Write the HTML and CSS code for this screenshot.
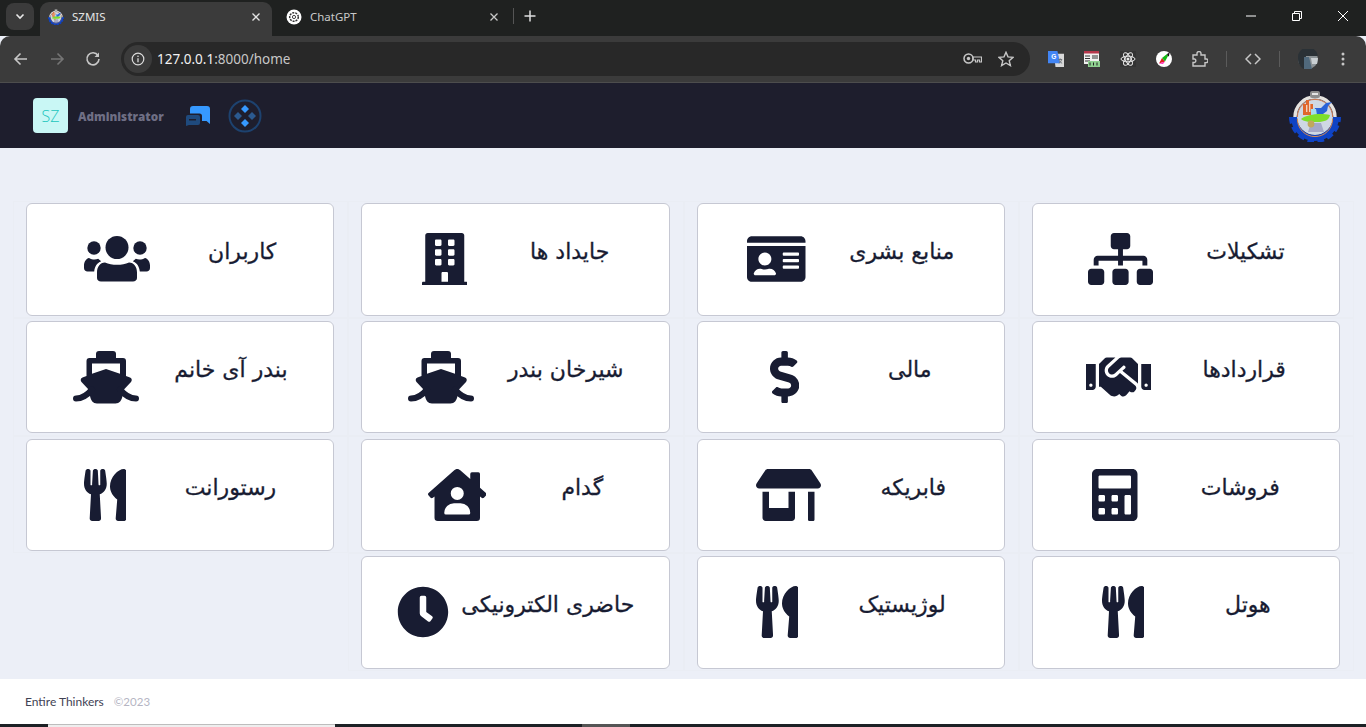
FILE: index.html
```html
<!DOCTYPE html>
<html lang="fa">
<head>
<meta charset="utf-8">
<title>SZMIS</title>
<link rel="stylesheet" href="styles.css">
</head>
<body>
<svg class="defs" width="0" height="0" aria-hidden="true">
  <symbol id="logo" viewBox="0 0 52 52">
    <circle cx="26" cy="27" r="18" fill="#cfd8e4"/>
    <path d="M2 27A24 24 0 0 0 50 27H44A18 18 0 0 1 8 27Z" fill="#0f43c4"/>
    <path d="M2 27A24 24 0 0 0 50 27" fill="none" stroke="#0f43c4" stroke-width="4" stroke-dasharray="6.500 3.500"/>
    <path d="M6 27A20 20 0 0 1 46 27" fill="none" stroke="#e6e3e0" stroke-width="3.400"/>
    <path d="M8.400 27A17.600 17.600 0 0 1 43.600 27" fill="none" stroke="#c96a3c" stroke-width=".9"/>
    <path d="M8.400 29A17.600 17.600 0 0 0 43.600 29" fill="none" stroke="#d98a50" stroke-width="1"/>
    <rect x="21" y="1" width="10" height="7" rx="2" fill="#8d8d8d"/>
    <rect x="23" y="3" width="6" height="2" fill="#e4e4e4"/>
    <path d="M14 25V14h3v-4h3v4h4v11Z" fill="#e0672c"/>
    <path d="M17 15h1.400v7H17zM20 13h1.400v9H20z" fill="#f3d2bd"/>
    <path d="M24 25l2-7 6 0 5-5 6-1-4 4-1 5-4 3-3 2Z" fill="#2a63d8"/>
    <path d="M22 19h5l1 6h-6Z" fill="#a6dcf0"/>
    <path d="M12 29c6-5 20-6 29-4-1 5-5 7-13 7-6 0-13 0-16-3Z" fill="#7ede2c"/>
    <path d="M22 33h10l3 9H19Z" fill="#a4a8c8"/>
    <circle cx="22" cy="34" r="3.400" fill="#c1a85c"/>
  </symbol>
  <symbol id="ship" viewBox="0 0 66 53">
    <path d="M26 0h14a3 3 0 0 1 3 3v5H23V3a3 3 0 0 1 3-3Z"/>
    <path fill-rule="evenodd" d="M16 7h34a3 3 0 0 1 3 3v15l4 1.500c2 .8 2.300 3 1 4.500l-7.500 8-1 6c-.8 4.500-3 7.500-7 7.500H24c-4 0-6.200-3-7-7.500l-1-6-7.500-8c-1.300-1.500-1-3.700 1-4.500l4-1.500V10a3 3 0 0 1 3-3ZM19 12.500v10.200L33 18l14 4.700V12.500Z"/>
    <path d="M3 47.500c6 0 11-3 16-9M63 47.500c-6 0-11-3-16-9" fill="none" stroke="#181c32" stroke-width="6" stroke-linecap="round"/>
  </symbol>
  <symbol id="users" viewBox="0 0 66 52">
    <circle cx="33" cy="14.500" r="11.500"/>
    <circle cx="10" cy="15" r="6.700"/>
    <circle cx="56" cy="15" r="6.700"/>
    <path d="M21 29.500c3.500 1.500 7.500 2.300 12 2.300s8.500-.8 12-2.300c5 0 8 4.500 8 10V45c0 2.200-1.800 3.500-4 3.500H17c-2.200 0-4-1.300-4-3.500v-5.500c0-5.500 3-10 8-10Z"/>
    <path d="M5 25c2 1 3.500 1.500 5.500 1.500 1.300 0 2.500-.2 3.700-.7 1 1 1.800 1.700 3 2.500-4.500 2-6.500 5.500-7 10.200H3.500C1.500 38.500 0 37 0 35v-2.500C0 29 2 25.500 5 25ZM61 25c-2 1-3.500 1.500-5.500 1.500-1.300 0-2.500-.2-3.700-.7-1 1-1.800 1.700-3 2.500 4.500 2 6.500 5.500 7 10.200h6.700c2 0 3.500-1.500 3.500-3.500v-2.500C66 29 64 25.500 61 25Z"/>
  </symbol>
  <symbol id="utensils" viewBox="0 0 416 512">
    <path d="M207.900 15.200c.8 4.700 16.100 94.500 16.100 128.800 0 52.300-27.800 89.600-68.900 104.600L168 486.700c.7 13.700-10.200 25.300-24 25.300H80c-13.700 0-24.700-11.500-24-25.300l12.900-238.100C27.700 233.600 0 196.200 0 144 0 109.600 15.300 19.900 16.100 15.200 19.300-5.100 61.400-5.400 64 16.300v141.200c1.300 3.400 15.100 3.200 16 0 1.400-25.300 7.900-139.200 8-141.800 3.300-20.800 44.700-20.800 47.900 0 .2 2.700 6.600 116.500 8 141.800.9 3.200 14.800 3.400 16 0V16.300c2.600-21.600 44.800-21.400 48-1.100zm119.200 285.700l-15 185.100c-1.200 14 9.900 26 23.900 26h56c13.300 0 24-10.700 24-24V24c0-13.200-10.700-24-24-24-82.500 0-221.400 178.500-64.900 300.900z"/>
  </symbol>
</svg>

<div class="tabstrip">
  <button class="tab-search"><svg width="10" height="7" viewBox="0 0 10 7"><path d="M1.500 1.500 5 5l3.500-3.500" fill="none" stroke="#e8e8e8" stroke-width="1.600"/></svg></button>
  <div class="tab tab-active">
    <svg class="favicon" width="16" height="16"><use href="#logo"/></svg>
    <span class="tab-title">SZMIS</span>
    <svg class="tab-close" width="10" height="10" viewBox="0 0 10 10"><path d="M1.500 1.500l7 7m0-7-7 7" stroke="#e3e3e3" stroke-width="1.300"/></svg>
  </div>
  <div class="tab tab-idle">
    <svg class="favicon" width="16" height="16" viewBox="0 0 16 16"><circle cx="8" cy="8" r="7.500" fill="#fff"/><circle cx="8" cy="8" r="4.300" fill="none" stroke="#333" stroke-width="1.500" stroke-dasharray="2 1"/><circle cx="8" cy="8" r="1.600" fill="none" stroke="#444"/></svg>
    <span class="tab-title">ChatGPT</span>
    <svg class="tab-close" width="10" height="10" viewBox="0 0 10 10"><path d="M1.500 1.500l7 7m0-7-7 7" stroke="#c7c7c7" stroke-width="1.300"/></svg>
  </div>
  <span class="tab-sep"></span>
  <svg class="tab-new" width="12" height="12" viewBox="0 0 12 12"><path d="M6 .5v11M.5 6h11" stroke="#dedede" stroke-width="1.500"/></svg>
  <div class="win-controls">
    <svg width="10" height="10" viewBox="0 0 10 10"><path d="M0 5h10" stroke="#fff"/></svg>
    <svg width="10" height="10" viewBox="0 0 10 10"><path d="M2.500 2V.5h7v7H8M.5 2.500h7v7h-7Z" fill="none" stroke="#fff"/></svg>
    <svg width="10" height="10" viewBox="0 0 10 10"><path d="M0 0l10 10M10 0 0 10" stroke="#fff"/></svg>
  </div>
</div>

<div class="toolbar">
  <div class="nav">
    <svg width="16" height="16" viewBox="0 0 16 16"><path d="M14 8H2.500M7.500 2.500 2 8l5.500 5.500" fill="none" stroke="#c7c7c7" stroke-width="1.600"/></svg>
    <svg width="16" height="16" viewBox="0 0 16 16"><path d="M2 8h11.500M8.500 2.500 14 8l-5.500 5.500" fill="none" stroke="#757575" stroke-width="1.600"/></svg>
    <svg width="16" height="16" viewBox="0 0 16 16"><path d="M13 4.500A6 6 0 1 0 14 8" fill="none" stroke="#c7c7c7" stroke-width="1.600"/><path d="M14 1.500v4.500H9.500Z" fill="#c7c7c7"/></svg>
  </div>
  <div class="omnibox">
    <span class="site-info"><svg width="14" height="14" viewBox="0 0 14 14"><circle cx="7" cy="7" r="5.800" fill="none" stroke="#dcdcdc" stroke-width="1.200"/><path d="M7 6.200v4" stroke="#dcdcdc" stroke-width="1.300"/><circle cx="7" cy="4.200" r=".8" fill="#dcdcdc"/></svg></span>
    <span class="url">127.0.0.1<span class="url-path">:8000/home</span></span>
    <svg class="omni-key" width="19" height="11" viewBox="0 0 19 11"><circle cx="5.500" cy="5.500" r="4.500" fill="none" stroke="#c7c7c7" stroke-width="1.500"/><circle cx="5.500" cy="5.500" r="1.700" fill="#c7c7c7"/><path d="M10 4h8.500v5h-2V7h-2v2h-2V7H10Z" fill="none" stroke="#c7c7c7" stroke-width="1.200"/></svg>
    <svg class="omni-star" width="16" height="16" viewBox="0 0 16 16"><path d="M8 1.300l2 4.600 5 .5-3.800 3.300 1.200 4.900L8 12l-4.400 2.600 1.200-4.900L1 6.400l5-.5Z" fill="none" stroke="#c7c7c7" stroke-width="1.400"/></svg>
  </div>
  <div class="ext">
    <svg width="16" height="16" viewBox="0 0 17 17"><path d="M6 3h11v14H8Z" fill="#d9d9d9"/><path d="M0 0h10l3 13H0Z" fill="#4285f4"/><text x="3.500" y="9" class="ext-g">G</text><path d="M11 9h4M13 8v1m1.500 0c-.5 2-1.500 3-3 4m.5-3c.5 1.500 1.500 2.500 3 3" stroke="#6b7075" fill="none"/></svg>
    <svg width="16" height="16" viewBox="0 0 16 16"><rect width="15" height="13" fill="#f1f1f1"/><rect width="15" height="2.500" fill="#b5364b"/><path d="M1 5h5M1 7.500h5M1 10h5M8 5h6M8 7h6" stroke="#333"/><rect x="4" y="10" width="12" height="6" fill="#8fd190"/><path d="M6 11.500v3M9.500 11.500v3M13 11.500v3" stroke="#222"/></svg>
    <svg width="16" height="16" viewBox="0 0 16 16"><rect width="16" height="16" fill="#333"/><g fill="none" stroke="#e8e8e8"><ellipse cx="8" cy="8" rx="7" ry="2.800"/><ellipse cx="8" cy="8" rx="7" ry="2.800" transform="rotate(60 8 8)"/><ellipse cx="8" cy="8" rx="7" ry="2.800" transform="rotate(120 8 8)"/></g><circle cx="8" cy="8" r="1.500" fill="#e8e8e8"/></svg>
    <svg width="16" height="16" viewBox="0 0 16 16"><circle cx="8" cy="8" r="8" fill="#fff"/><path d="M3 12.500 6 7l3 3.500Z" fill="#e02020"/><path d="M6 7l5-4 1 2-3 5.500Z" fill="#14b814"/><path d="M11 3l2.500-1.500L13 5l-1 .5Z" fill="#111"/><path d="M3 12.500 9 10.500l-2 2.500Z" fill="#ff2fc0"/></svg>
    <svg width="16" height="16" viewBox="0 0 16 16"><path d="M1 4h4V2.500a2 2 0 0 1 4 0V4h4v4h1.200a1.800 1.800 0 0 1 0 3.600H13V15H1v-3.500h1.500a1.800 1.800 0 0 0 0-3.500H1Z" fill="none" stroke="#c7c7c7" stroke-width="1.400"/></svg>
    <span class="tool-sep"></span>
    <svg width="16" height="12" viewBox="0 0 16 12"><path d="M6 1 1 6l5 5M10 1l5 5-5 5" fill="none" stroke="#c7c7c7" stroke-width="1.500"/></svg>
    <span class="tool-sep"></span>
    <svg class="profile" width="20" height="20" viewBox="0 0 20 20"><circle cx="10" cy="10" r="10" fill="#8b9296"/><path d="M0 10A10 10 0 0 1 20 7H8l-2 13C2 18 0 14 0 10Z" fill="#2a3136"/><path d="M6 8h5l3 12H6Z" fill="#50697c"/><path d="M13 9h7l-1 6h-5Z" fill="#c9cfd2"/></svg>
    <svg width="4" height="14" viewBox="0 0 4 14"><circle cx="2" cy="2" r="1.500" fill="#c7c7c7"/><circle cx="2" cy="7" r="1.500" fill="#c7c7c7"/><circle cx="2" cy="12" r="1.500" fill="#c7c7c7"/></svg>
  </div>
</div>

<header class="app-header">
  <span class="avatar">SZ</span>
  <span class="user-name">Administrator</span>
  <svg class="chat-ico" width="24" height="20" viewBox="0 0 24 20"><path d="M7 0H21a3 3 0 0 1 3 3V18L20.500 15H16V10a2.500 2.500 0 0 0-2.500-2.500H4V3a3 3 0 0 1 3-3Z" fill="#3699ff"/><path d="M2 9H12a2 2 0 0 1 2 2v6a2 2 0 0 1-2 2H3L0 20V11a2 2 0 0 1 2-2Z" fill="#1f4a7d"/><path d="M3 13h7v1.500H3Z" fill="#1e1e2d"/></svg>
  <svg class="menu-ico" width="34" height="34" viewBox="0 0 34 34"><circle cx="17" cy="17" r="15.500" fill="none" stroke="#1d426f" stroke-width="2"/><path d="M17 6l4 4-4 4-4-4ZM17 20l4 4-4 4-4-4Z" fill="#3699ff"/><path d="M10 13l4 4-4 4-4-4ZM24 13l4 4-4 4-4-4Z" fill="#2b5a90"/></svg>
  <svg class="brand" width="52" height="52"><use href="#logo"/></svg>
</header>

<main class="board">
  <div class="cell"><a class="tile"><div class="label">تشکیلات</div>
    <svg class="ic" width="65" height="52" viewBox="0 0 640 512"><path d="M128 352H32c-17.670 0-32 14.330-32 32v96c0 17.670 14.330 32 32 32h96c17.670 0 32-14.330 32-32v-96c0-17.670-14.330-32-32-32zm-24-80h192v48h48v-48h192v48h48v-57.590c0-21.170-17.230-38.410-38.410-38.410H344v-64h40c17.670 0 32-14.330 32-32V32c0-17.670-14.330-32-32-32H256c-17.670 0-32 14.330-32 32v96c0 17.670 14.330 32 32 32h40v64H94.410C73.230 224 56 241.230 56 262.410V320h48v-48zm264 80h-96c-17.670 0-32 14.330-32 32v96c0 17.670 14.330 32 32 32h96c17.670 0 32-14.330 32-32v-96c0-17.670-14.330-32-32-32zm240 0h-96c-17.670 0-32 14.330-32 32v96c0 17.670 14.330 32 32 32h96c17.670 0 32-14.330 32-32v-96c0-17.670-14.330-32-32-32z"/></svg></a></div>
  <div class="cell"><a class="tile"><div class="label">منابع بشری</div>
    <svg class="ic" width="58.500" height="52" viewBox="0 0 576 512"><path d="M528 32H48C21.500 32 0 53.500 0 80v16h576V80c0-26.500-21.500-48-48-48zM0 432c0 26.500 21.500 48 48 48h480c26.500 0 48-21.500 48-48V128H0v304zm352-232c0-4.400 3.600-8 8-8h144c4.400 0 8 3.600 8 8v16c0 4.400-3.600 8-8 8H360c-4.400 0-8-3.600-8-8v-16zm0 64c0-4.400 3.600-8 8-8h144c4.400 0 8 3.600 8 8v16c0 4.400-3.600 8-8 8H360c-4.400 0-8-3.600-8-8v-16zm0 64c0-4.400 3.600-8 8-8h144c4.400 0 8 3.600 8 8v16c0 4.400-3.600 8-8 8H360c-4.400 0-8-3.600-8-8v-16zM176 192c35.300 0 64 28.700 64 64s-28.700 64-64 64-64-28.700-64-64 28.700-64 64-64zM67.100 396.200C75.500 370.500 99.600 352 128 352h8.200c12.300 5.100 25.700 8 39.800 8s27.600-2.900 39.800-8h8.200c28.400 0 52.500 18.500 60.900 44.200 3.200 9.900-5.200 19.800-15.600 19.800H82.700c-10.400 0-18.800-10-15.600-19.800z"/></svg></a></div>
  <div class="cell"><a class="tile"><div class="label">جایداد ها</div>
    <svg class="ic" width="45.500" height="52" viewBox="0 0 448 512"><path d="M436 480h-20V24c0-13.255-10.745-24-24-24H56C42.745 0 32 10.745 32 24v456H12c-6.627 0-12 5.373-12 12v20h448v-20c0-6.627-5.373-12-12-12zM128 76c0-6.627 5.373-12 12-12h40c6.627 0 12 5.373 12 12v40c0 6.627-5.373 12-12 12h-40c-6.627 0-12-5.373-12-12V76zm0 96c0-6.627 5.373-12 12-12h40c6.627 0 12 5.373 12 12v40c0 6.627-5.373 12-12 12h-40c-6.627 0-12-5.373-12-12v-40zm52 148h-40c-6.627 0-12-5.373-12-12v-40c0-6.627 5.373-12 12-12h40c6.627 0 12 5.373 12 12v40c0 6.627-5.373 12-12 12zm76 160h-64v-84c0-6.627 5.373-12 12-12h40c6.627 0 12 5.373 12 12v84zm64-172c0 6.627-5.373 12-12 12h-40c-6.627 0-12-5.373-12-12v-40c0-6.627 5.373-12 12-12h40c6.627 0 12 5.373 12 12v40zm0-96c0 6.627-5.373 12-12 12h-40c-6.627 0-12-5.373-12-12v-40c0-6.627 5.373-12 12-12h40c6.627 0 12 5.373 12 12v40zm0-96c0 6.627-5.373 12-12 12h-40c-6.627 0-12-5.373-12-12V76c0-6.627 5.373-12 12-12h40c6.627 0 12 5.373 12 12v40z"/></svg></a></div>
  <div class="cell"><a class="tile"><div class="label">کاربران</div>
    <svg class="ic" width="66" height="52"><use href="#users"/></svg></a></div>

  <div class="cell"><a class="tile"><div class="label">قراردادها</div>
    <svg class="ic" width="65" height="52" viewBox="0 0 640 512"><path d="M434.700 64h-85.900c-8 0-15.700 3-21.600 8.400l-98.300 90c-.1.1-.2.3-.3.4-16.600 15.600-16.300 40.500-2.100 56 12.700 13.900 39.400 17.600 56.100 2.700.1-.1.3-.1.400-.2l79.900-73.200c6.500-5.900 16.700-5.500 22.600 1 6 6.500 5.500 16.600-1 22.600l-26.100 23.900L504 313.800c2.900 2.400 5.500 5 7.900 7.700V128l-54.600-54.600c-5.900-6-14.100-9.400-22.600-9.400zM544 128.200v223.900c0 17.700 14.300 32 32 32h64V128.200h-96zm48 223.900c-8.800 0-16-7.200-16-16s7.200-16 16-16 16 7.200 16 16-7.200 16-16 16zM0 384h64c17.700 0 32-14.300 32-32V128.200H0V384zm48-63.900c8.800 0 16 7.200 16 16s-7.200 16-16 16-16-7.200-16-16c0-8.900 7.200-16 16-16zm435.900 18.600L334.600 217.500l-30 27.500c-29.700 27.100-75.200 24.500-101.700-4.400-26.900-29.400-24.800-74.900 4.400-101.700L289.100 64h-83.800c-8.500 0-16.600 3.400-22.600 9.400L128 128v223.900h18.300l90.500 81.900c27.400 22.300 67.700 18.100 90-9.300l.2-.2 17.900 15.500c15.900 13 39.400 10.500 52.300-5.400l31.400-38.600 5.400 4.400c13.700 11.100 33.900 9.100 45-4.700l9.500-11.700c11.200-13.800 9.100-33.900-4.600-45.100z"/></svg></a></div>
  <div class="cell"><a class="tile"><div class="label">مالی</div>
    <svg class="ic" width="29.250" height="52" viewBox="0 0 288 512"><path d="M209.200 233.400l-108-31.600C88.700 198.200 80 186.500 80 173.500c0-16.300 13.200-29.500 29.500-29.500h66.300c12.200 0 24.200 3.700 34.200 10.500 6.100 4.100 14.300 3.100 19.500-2l34.800-34c7.100-6.900 6.100-18.400-1.800-24.500C238 74.800 207.400 64.100 176 64V16c0-8.800-7.200-16-16-16h-32c-8.800 0-16 7.200-16 16v48h-2.500C45.800 64-5.400 118.700.5 183.600c4.200 46.100 39.400 83.600 83.800 96.600l102.500 30c12.500 3.700 21.200 15.300 21.200 28.300 0 16.300-13.200 29.500-29.500 29.500h-66.300C100 368 88 364.300 78 357.500c-6.100-4.100-14.300-3.100-19.500 2l-34.800 34c-7.100 6.900-6.100 18.400 1.800 24.500 24.500 19.200 55.100 29.900 86.500 30v48c0 8.800 7.200 16 16 16h32c8.800 0 16-7.200 16-16v-48.200c46.600-.9 90.300-28.600 105.700-72.700 21.500-61.600-14.600-124.800-72.500-141.700z"/></svg></a></div>
  <div class="cell"><a class="tile"><div class="label">شیرخان بندر</div>
    <svg class="ic" width="66" height="53"><use href="#ship"/></svg></a></div>
  <div class="cell"><a class="tile"><div class="label">بندر آی خانم</div>
    <svg class="ic" width="66" height="53"><use href="#ship"/></svg></a></div>

  <div class="cell"><a class="tile"><div class="label">فروشات</div>
    <svg class="ic" width="45.500" height="52" viewBox="0 0 448 512"><path d="M400 0H48C22.400 0 0 22.400 0 48v416c0 25.600 22.400 48 48 48h352c25.600 0 48-22.400 48-48V48C448 22.400 425.600 0 400 0zM128 435.200c0 6.400-6.400 12.800-12.800 12.800H76.800c-6.400 0-12.800-6.400-12.800-12.800v-38.400c0-6.400 6.400-12.800 12.800-12.800h38.400c6.400 0 12.800 6.400 12.800 12.800v38.400zm0-128c0 6.400-6.400 12.800-12.800 12.800H76.800c-6.400 0-12.800-6.400-12.800-12.800v-38.400c0-6.400 6.400-12.800 12.800-12.800h38.400c6.400 0 12.800 6.400 12.800 12.800v38.400zm128 128c0 6.400-6.400 12.800-12.800 12.800h-38.400c-6.400 0-12.800-6.400-12.800-12.800v-38.400c0-6.400 6.400-12.800 12.800-12.800h38.400c6.400 0 12.800 6.400 12.800 12.800v38.400zm0-128c0 6.400-6.400 12.800-12.800 12.800h-38.400c-6.400 0-12.800-6.400-12.800-12.800v-38.400c0-6.400 6.400-12.800 12.800-12.800h38.400c6.400 0 12.800 6.400 12.800 12.800v38.400zm128 128c0 6.400-6.400 12.800-12.800 12.800h-38.400c-6.400 0-12.800-6.400-12.800-12.800V268.800c0-6.400 6.400-12.800 12.800-12.800h38.400c6.400 0 12.800 6.400 12.800 12.800v166.400zm0-256c0 6.400-6.400 12.800-12.800 12.800H76.800c-6.400 0-12.800-6.400-12.800-12.800V76.800C64 70.400 70.400 64 76.800 64h294.400c6.400 0 12.800 6.400 12.800 12.800v102.400z"/></svg></a></div>
  <div class="cell"><a class="tile"><div class="label">فابریکه</div>
    <svg class="ic" width="65" height="52" viewBox="0 0 640 512"><path d="M320 384H128V224H64v256c0 17.700 14.300 32 32 32h256c17.700 0 32-14.300 32-32V224h-64v160zm314.600-241.800l-85.300-128c-6-8.900-16-14.200-26.700-14.200H117.400c-10.700 0-20.700 5.300-26.600 14.200l-85.300 128c-14.200 21.300 1 49.800 26.600 49.800H608c25.500 0 40.700-28.500 26.600-49.800zM512 496c0 8.800 7.200 16 16 16h32c8.800 0 16-7.200 16-16V224h-64v272z"/></svg></a></div>
  <div class="cell"><a class="tile"><div class="label">گدام</div>
    <svg class="ic" width="58.500" height="52" viewBox="0 0 576 512"><path d="M570.690 236.270 512 184.440V48a16 16 0 0 0-16-16H432a16 16 0 0 0-16 16V99.670L314.780 10.300C308.500 4.610 296.530 0 288 0s-20.460 4.610-26.740 10.300l-256 226A18.270 18.270 0 0 0 0 248.200a18.640 18.640 0 0 0 4.090 10.710L25.500 282.700a21.140 21.140 0 0 0 12 5.300 21.670 21.670 0 0 0 10.690-4.110l15.900-14V480a32 32 0 0 0 32 32H480a32 32 0 0 0 32-32V269.880l15.910 14A21.940 21.940 0 0 0 538.630 288a20.890 20.890 0 0 0 11.870-5.310l21.410-23.810A21.640 21.640 0 0 0 576 248.190 21 21 0 0 0 570.690 236.270ZM288 176a64 64 0 1 1-64 64A64 64 0 0 1 288 176ZM400 448H176a16 16 0 0 1-16-16 96 96 0 0 1 96-96h64a96 96 0 0 1 96 96A16 16 0 0 1 400 448Z"/></svg></a></div>
  <div class="cell"><a class="tile"><div class="label">رستورانت</div>
    <svg class="ic" width="42.250" height="52"><use href="#utensils"/></svg></a></div>

  <div class="cell"><a class="tile"><div class="label">هوتل</div>
    <svg class="ic" width="42.250" height="52"><use href="#utensils"/></svg></a></div>
  <div class="cell"><a class="tile"><div class="label">لوژیستیک</div>
    <svg class="ic" width="42.250" height="52"><use href="#utensils"/></svg></a></div>
  <div class="cell"><a class="tile"><div class="label">حاضری الکترونیکی</div>
    <svg class="ic" width="52" height="52" viewBox="0 0 512 512"><path d="M256 8C119 8 8 119 8 256S119 504 256 504 504 393 504 256 393 8 256 8Zm92.490 313h0l-20 25a16 16 0 0 1-22.490 2.500h0l-67-49.720a40 40 0 0 1-15-31.230V112a16 16 0 0 1 16-16h32a16 16 0 0 1 16 16V256l58 42.500A16 16 0 0 1 348.490 321Z"/></svg></a></div>
</main>

<footer class="app-footer">
  <span class="foot-name">Entire Thinkers</span>
  <span class="foot-year">©2023</span>
</footer>

<div class="strip">
  <span class="strip-a"></span>
  <span class="strip-b"></span>
  <span class="strip-c"></span>
  <span class="strip-d"></span>
</div>
</body>
</html>
```
FILE: styles.css
```css
* { box-sizing: border-box; }
html, body { margin: 0; height: 727px; overflow: hidden; }
body { display: flex; flex-direction: column; background: #eceff7; font-family: "Noto Sans", sans-serif; }
.defs { position: absolute; }

.tabstrip { height: 36px; flex: none; display: flex; align-items: flex-start; background: #1f2120; color: #e3e3e3; font-size: 12px; }
.tab-search { width: 28px; height: 27px; margin: 3px 6px 0; padding: 0; border: 0; border-radius: 8px; background: #3b3b3b; display: flex; align-items: center; justify-content: center; }
.tab { height: 34px; margin-top: 2px; display: flex; align-items: center; padding-bottom: 5px; }
.tab-active { width: 232px; background: #3b3b3b; border-radius: 9px 9px 0 0; padding-left: 8px; }
.tab-idle { width: 241px; padding-left: 14px; color: #c9c9c9; }
.favicon { flex: none; }
.tab-title { margin-left: 8px; flex: 1; font-family: "Noto Sans", sans-serif; font-size: 11.500px; }
.tab-close { margin-right: 11px; flex: none; }
.tab-idle .tab-close { margin-right: 14px; }
.tab-sep { width: 1px; height: 16px; margin-top: 8px; background: #555; }
.tab-new { margin: 10px 0 0 10px; }
.win-controls { margin-left: auto; width: 138px; height: 32px; display: flex; align-items: center; padding-left: 18px; gap: 36px; }

.toolbar { height: 47px; flex: none; display: flex; align-items: center; background: #3b3b3b; border-radius: 10px 10px 0 0; border-bottom: 1px solid #4d4d4d; padding: 0 0 1px 0; }
.nav { width: 121px; display: flex; align-items: center; padding-left: 13px; gap: 20px; }
.omnibox { width: 909px; height: 34px; display: flex; align-items: center; background: #282828; border-radius: 17px; padding: 0 16px 0 3px; }
.site-info { width: 28px; height: 28px; border-radius: 50%; background: #3b3b3b; display: flex; align-items: center; justify-content: center; flex: none; }
.url { margin-left: 5px; font: 13.500px "Noto Sans", sans-serif; color: #f1f1f1; }
.url-path { color: #c7c7c7; }
.omni-key { margin-left: auto; }
.omni-star { margin-left: 16px; }
.ext { flex: 1; display: flex; align-items: center; padding-left: 18px; gap: 20px; }
.ext-g { font: bold 7px "Liberation Sans", sans-serif; fill: #fff; }
.tool-sep { width: 1px; height: 16px; margin: 0 -2px; background: #5b5b5b; }
.profile { margin-right: 3px; }

.app-header { height: 65px; flex: none; display: flex; align-items: center; background: #1e1e2d; padding: 0 25px 0 33px; }
.avatar { width: 35px; height: 35px; border-radius: 4px; background: #c9f7f5; color: #1bc5bd; font: 300 16px "Open Sans", sans-serif; display: flex; align-items: center; justify-content: center; }
.user-name { margin-left: 10px; width: 86px; font: 800 11.700px "Open Sans", sans-serif; color: #6f6f85; white-space: nowrap; }
.chat-ico { margin-left: 22px; }
.menu-ico { margin-left: 18px; }
.brand { margin-left: auto; }

.board { height: 531px; flex: none; padding: 52.500px 12px 0 13px; display: grid; grid-template-columns: repeat(4, 335.330px); grid-auto-rows: 117.670px; direction: rtl; justify-content: end; }
.cell { padding: 1.800px 13px 1.500px 12px; border: 1px solid #eaedf4; }
.tile { height: 100%; display: flex; align-items: center; justify-content: space-around; padding: 0 28px; background: #fff; border: 1px solid #c6c8d3; border-radius: 6px; color: #181c32; }
.label { font: 22px "DejaVu Sans", sans-serif; color: #181c32; margin-bottom: 15px; white-space: nowrap; -webkit-text-stroke: .3px #181c32; }
.ic { fill: #181c32; flex: none; }

.app-footer { height: 45px; flex: none; background: #fff; display: flex; align-items: center; padding: 0 25px; font: 12px Lato, sans-serif; }
.foot-name { color: #3f4254; }
.foot-year { margin-left: 10px; font-size: 11.500px; color: #b5b5c3; }

.strip { height: 3px; flex: none; display: flex; background: #1c2125; }
.strip-a { width: 48px; }
.strip-b { width: 287px; background: #eeeeee; border-top: 1px solid #bdbdbd; }
.strip-c { width: 247px; }
.strip-d { width: 48px; background: #555; }
```
